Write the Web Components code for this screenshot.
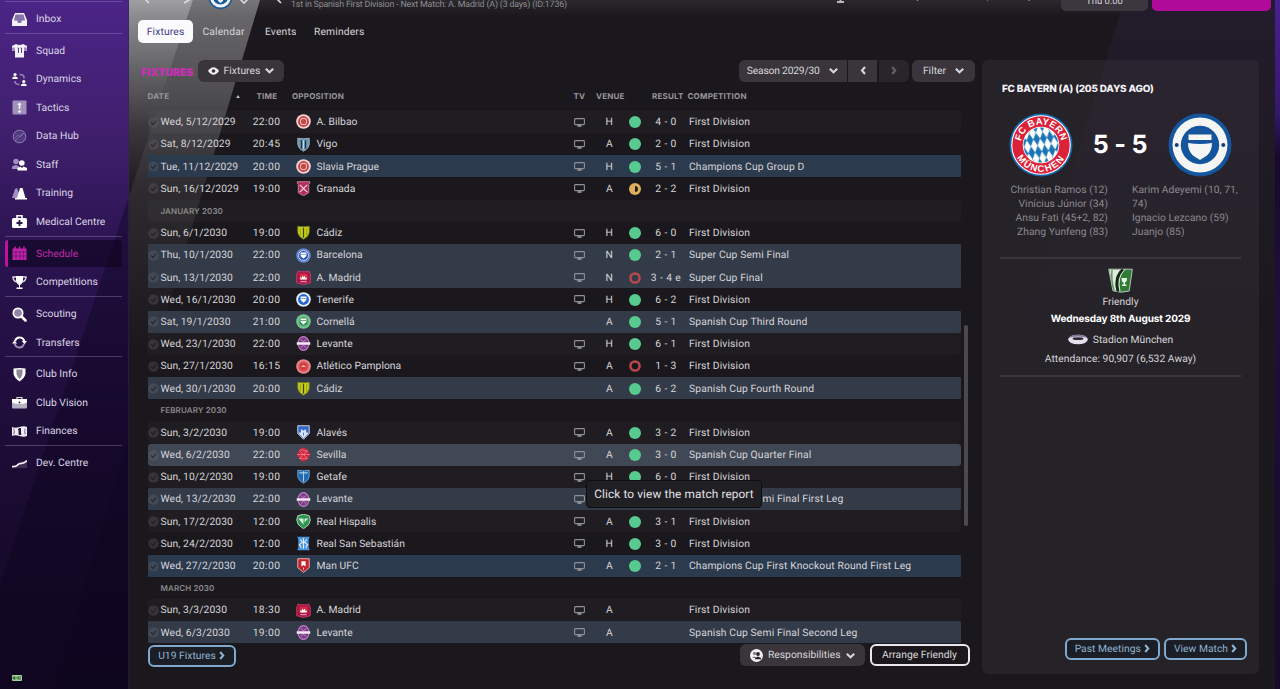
<!DOCTYPE html>
<html lang="en">
<head>
<meta charset="utf-8">
<title>Fixtures</title>
<style>
    html, body {
        margin: 0;
        height: 689px;
        overflow: hidden;
        background: #1a181c;
    }

    body {
        font: 10.3px/14px Roboto, "Liberation Sans", sans-serif;
        letter-spacing: .03px;
        text-rendering: geometricPrecision;
        color: #d8d6da;
    }
</style>
</head>
<body>

<fm-app></fm-app>

<template id="app-template">
    <style>
        :host {
            display: flex;
            position: relative;
            width: 1280px;
            height: 689px;
            overflow: hidden;
            background: #1a181c;
        }

        .backdrop {
            position: absolute;
            inset: 0;
        }

        fm-sidebar { flex: 0 0 129px; }

        main {
            position: relative;
            flex: 1;
            display: flex;
            flex-direction: column;
            min-width: 0;
        }

        .body {
            display: flex;
            height: 630px;
        }

        fm-fixtures { flex: 0 0 853px; }
    </style>

    <svg class="backdrop" width="1280" height="689" viewBox="0 0 1280 689">
        <defs>
            <linearGradient id="side" x1="0" y1="0" x2="0" y2="1">
                <stop offset="0" stop-color="#4b2487"/>
                <stop offset=".18" stop-color="#41206f"/>
                <stop offset=".36" stop-color="#2b1451"/>
                <stop offset=".6" stop-color="#1f0d3a"/>
                <stop offset=".8" stop-color="#180a2c"/>
                <stop offset="1" stop-color="#150926"/>
            </linearGradient>
            <linearGradient id="beam1" x1="0" y1="0" x2="0" y2="1">
                <stop offset="0" stop-color="#fff" stop-opacity=".55"/>
                <stop offset=".3" stop-color="#fff" stop-opacity=".36"/>
                <stop offset=".65" stop-color="#fff" stop-opacity=".14"/>
                <stop offset="1" stop-color="#fff" stop-opacity="0"/>
            </linearGradient>
            <linearGradient id="beam2" x1="0" y1="0" x2="0" y2="1">
                <stop offset="0" stop-color="#fff" stop-opacity=".36"/>
                <stop offset=".25" stop-color="#fff" stop-opacity=".24"/>
                <stop offset=".55" stop-color="#fff" stop-opacity=".08"/>
                <stop offset="1" stop-color="#fff" stop-opacity="0"/>
            </linearGradient>
            <linearGradient id="topbar" x1="0" y1="0" x2="0" y2="1">
                <stop offset="0" stop-color="#2a282d"/>
                <stop offset="1" stop-color="#1a181c"/>
            </linearGradient>
            <linearGradient id="glow" x1="0" y1="0" x2="0" y2="1">
                <stop offset="0" stop-color="#231c2c"/>
                <stop offset="1" stop-color="#1a181c"/>
            </linearGradient>
            <linearGradient id="edge" x1="0" y1="0" x2="0" y2="1">
                <stop offset="0" stop-color="#482090"/>
                <stop offset=".16" stop-color="#35186e"/>
                <stop offset=".23" stop-color="#170a2b"/>
                <stop offset=".45" stop-color="#200e3d"/>
                <stop offset="1" stop-color="#160a28"/>
            </linearGradient>
        </defs>
        <rect x="129" width="1146" height="689" fill="#1a181c"/>
        <rect x="129" width="1146" height="16" fill="url(#topbar)"/>
        <path d="M1124 0H1275V330H1025Z" fill="url(#glow)"/>
        <path d="M129 0H193L129 196Z" fill="url(#beam1)"/>
        <path d="M193 0H260L155 350H129V196Z" fill="url(#beam2)"/>
        <rect width="129" height="689" fill="url(#side)"/>
        <path d="M129 196V689H0V585Z" fill="#0a0418" fill-opacity=".35"/>
        <path d="M129 437V689H54Z" fill="#0a0418" fill-opacity=".2"/>
        <rect x="128" width="1" height="689" fill="#34284a" opacity=".5"/>
        <rect x="1275" width="5" height="689" fill="url(#edge)"/>
    </svg>
    <fm-sidebar></fm-sidebar>
    <main>
        <fm-header></fm-header>
        <div class="body">
            <fm-fixtures></fm-fixtures>
            <fm-match-panel></fm-match-panel>
        </div>
    </main>
</template>

<template id="sidebar-template">
    <style>
        :host {
            display: flex;
            flex-direction: column;
            position: relative;
            box-sizing: border-box;
            padding: 1px 7px 0 5px;
            height: 689px;
        }

        .group {
            border-top: 1px solid rgba(190, 170, 220, .3);
            padding-top: 2.3px;
        }

        .item {
            display: flex;
            align-items: center;
            height: 28.5px;
            box-sizing: border-box;
            padding: 1.2px 0 0 7px;
            gap: 9px;
            color: #dcd6e6;
        }

        .item svg { flex: 0 0 15px; }

        .item.active {
            height: 27px;
            margin: .75px 0;
            border-left: 3px solid #c0119f;
            border-radius: 3px;
            padding-left: 4px;
            background: rgba(14, 4, 28, .6);
            color: #c02aa9;
        }

        .status {
            margin: auto 0 7px 7px;
            height: 10px;
        }
    </style>
    <nav></nav>
    <div class="status">
        <svg width="10" height="9" viewBox="0 0 10 9"><rect y="2" width="10" height="6" rx="1" fill="#a9cf9f"/><path d="M1 5h4M3 3.4L1 5l2 1.6M9 4H6v2h3" stroke="#2c6a30" fill="none" stroke-width="1.2"/></svg>
    </div>
</template>

<template id="header-template">
    <style>
        :host {
            display: flex;
            flex-direction: column;
            height: 59px;
        }

        .top {
            display: flex;
            height: 12px;
            margin-bottom: 8px;
            align-items: flex-start;
        }

        .nav { flex: 0 0 162px; }

        .sub {
            flex: 0 0 540px;
            font-size: 8.900px;
            line-height: 10px;
            letter-spacing: -.19px;
            color: #8e8c90;
        }

        .marks { flex: 0 0 230px; }

        .time, .go {
            box-sizing: border-box;
            height: 11px;
            border-radius: 0 0 5px 5px;
        }

        .time {
            width: 87px;
            background: #3b373f;
            color: #d5d3d7;
            text-align: center;
            font-size: 9.5px;
            line-height: 4px;
            letter-spacing: 0;
        }

        .go {
            width: 119px;
            margin-left: 4px;
            background: #b00a9b;
        }

        .tabs {
            display: flex;
            padding-left: 9px;
        }

        .tab {
            height: 23px;
            line-height: 23px;
            letter-spacing: .15px;
            color: #d8d6da;
        }

        .tab.active {
            width: 55px;
            text-align: center;
            border-radius: 5px;
            background: #fbfafc;
            color: #433a8c;
            margin-right: 9.500px;
        }

        .calendar { width: 62.500px; }
        .events { width: 49px; }
    </style>
    <div class="top">
        <svg class="nav" width="162" height="12" viewBox="129 0 162 12">
            <path d="M149-2l-3 2 3 3M184-3l5 3-5 3M240 -1l4 4 4-4M282-3l-4 3 3 3" fill="none" stroke="#dddbdf" stroke-width="1.6"/>
            <circle cx="220.500" cy="-3" r="12" fill="#15569c"/>
            <circle cx="220.500" cy="-3" r="10.500" fill="#f3f4f4"/>
            <circle cx="220.500" cy="-3" r="7.500" fill="#15569c"/>
            <path d="M217-3h7q0 4-3.500 6q-3.500-2-3.500-6z" fill="#f3f4f4"/>
        </svg>
        <div class="sub">1st in Spanish First Division - Next Match: A. Madrid (A) (3 days) (ID:1736)</div>
        <svg class="marks" width="230" height="12" viewBox="831 0 230 12">
            <path d="M837 2h7M840.500 -1v3" stroke="#b9b7bb" stroke-width="2"/>
            <path d="M917.500 0v1M988 0h-1M1029 0v1" stroke="#8a888c" stroke-width="1.500"/>
        </svg>
        <div class="time"><span>Thu 0:00</span></div>
        <div class="go"></div>
    </div>
    <div class="tabs">
        <div class="tab active">Fixtures</div>
        <div class="tab calendar">Calendar</div>
        <div class="tab events">Events</div>
        <div class="tab">Reminders</div>
    </div>
</template>

<template id="button-template">
    <style>
        :host {
            display: inline-flex;
            align-items: center;
            justify-content: center;
            box-sizing: border-box;
            height: 22.5px;
            gap: 6px;
            border-radius: 6px;
            background: #39353a;
            color: #d8d6da;
            white-space: nowrap;
        }

        :host([variant="outline"]) {
            gap: 3px;
            border: 2px solid #7fa9cf;
            background: #1c1e25;
            color: #8fb3d2;
        }

        :host([variant="light"]) {
            border: 2px solid #e9e7eb;
            background: #1a181c;
            color: #dddbdf;
        }

        :host([variant="dim"]) {
            background: #29262b;
            color: #656268;
        }

        svg { flex: none; }
    </style>
    <slot></slot>
</template>

<template id="fixtures-template">
    <style>
        :host {
            display: flex;
            flex-direction: column;
            position: relative;
        }

        .toolbar {
            display: flex;
            align-items: flex-start;
            height: 30px;
            padding: .5px 7px 0 12px;
            box-sizing: border-box;
        }

        h2 {
            width: 57px;
            margin: 6px 0 0;
            font: 900 10.6px/14px Inter, sans-serif;
            letter-spacing: -.05px;
            color: #c92fb7;
        }

        .view { width: 86px; }

        .season {
            width: 108px;
            gap: 9.5px;
            margin-left: auto;
            border-radius: 6px 0 0 6px;
            letter-spacing: -.2px;
        }

        .prev {
            width: 29px;
            margin: 0 1.5px;
            border-radius: 0;
        }

        .next {
            width: 30px;
            margin-right: 3.5px;
            border-radius: 0 6px 6px 0;
        }

        .filter {
            width: 63px;
            gap: 9px;
        }

        .head, .row {
            display: grid;
            align-items: center;
            width: 813px;
            margin-left: 18.5px;
            box-sizing: border-box;
            white-space: nowrap;
        }

        .head {
            height: 14px;
            font: 700 8px/14px Inter, sans-serif;
            letter-spacing: .2px;
            color: #98969b;
            grid-template-columns: 88px 21px 35.500px 281.500px 22.500px 56px 35.500px 1fr;
        }

        .sort {
            width: 0;
            height: 0;
            border: 2.5px solid transparent;
            border-top: 0;
            border-bottom: 3px solid #bbb9bd;
        }

        .rows {
            display: flex;
            flex-direction: column;
            height: 540.800px;
            padding-top: 7.900px;
            box-sizing: border-box;
        }

        .row {
            height: 22.190px;
            flex: none;
            grid-template-columns: 13px 80.500px 51px 24.500px 251px 23px 37.500px 13px 48px 1fr;
            border-radius: 3px;
        }

        .row > span {
            position: relative;
            top: .3px;
        }

        .row > :nth-child(3) {
            text-align: center;
            letter-spacing: .4px;
        }

        .row > :nth-child(9) {
            letter-spacing: .4px;
            padding-left: 2px;
        }

        .row svg, .row fm-crest { display: block; }

        .row fm-crest { margin-left: 3.500px; }

        .row .center { justify-self: center; text-align: center; }

        .odd { background: rgba(255, 255, 255, .022); }
        .euro { background: #2c3a4d; border-radius: 1px; }
        .cup { background: #333b49; border-radius: 1px; }
        .hover { background: #414855; }

        .month {
            padding-left: 13px;
            display: block;
            font: 600 8px/22.190px Inter, sans-serif;
            letter-spacing: .1px;
            color: #8c8a8e;
        }

        .date { letter-spacing: .1px; }
        .comp { letter-spacing: .14px; }

        .scrollbar {
            position: absolute;
            left: 835px;
            top: 266px;
            width: 3.5px;
            height: 201px;
            border-radius: 2px;
            background: #4b494e;
        }

        .footer {
            display: flex;
            padding: 0 12.5px 0 18.5px;
            gap: 4.5px;
        }

        .u19 { width: 88px; margin-top: .8px; }
        .resp { width: 125.5px; margin-left: auto; }
        .arrange { width: 100px; }

        .tooltip {
            position: absolute;
            left: 457px;
            top: 420.500px;
            width: 176px;
            height: 28px;
            box-sizing: border-box;
            border: 1.5px solid #0d0c0f;
            border-radius: 4px;
            background: #201f23;
            color: #e4e2e6;
            font-size: 11.800px;
            line-height: 26px;
            letter-spacing: .12px;
            text-align: center;
            white-space: nowrap;
        }
    </style>
    <div class="toolbar">
        <h2>FIXTURES</h2>
        <fm-button class="view" lead="eye" icon="down">Fixtures</fm-button>
        <fm-button class="season" icon="down">Season 2029/30</fm-button>
        <fm-button class="prev" icon="left"></fm-button>
        <fm-button class="next" variant="dim" icon="right"></fm-button>
        <fm-button class="filter" icon="down">Filter</fm-button>
    </div>
    <div class="head">
        <span>DATE</span><i class="sort"></i><span>TIME</span><span>OPPOSITION</span><span>TV</span><span>VENUE</span><span>RESULT</span><span>COMPETITION</span>
    </div>
    <div class="rows"></div>
    <div class="footer">
        <fm-button class="u19" variant="outline" icon="right">U19 Fixtures</fm-button>
        <fm-button class="resp" lead="people" icon="down">Responsibilities</fm-button>
        <fm-button class="arrange" variant="light">Arrange Friendly</fm-button>
    </div>
    <div class="scrollbar"></div>
    <div class="tooltip">Click to view the match report</div>
</template>

<template id="panel-template">
    <style>
        :host {
            display: flex;
            flex-direction: column;
            box-sizing: border-box;
            width: 277px;
            height: 614px;
            margin-top: 1px;
            padding: 21.5px 12px 14px 18px;
            border-radius: 6px;
            background: rgba(50, 47, 55, .47);
        }

        h3 {
            margin: 0 0 0 2px;
            font: 800 9.9px/14px Inter, sans-serif;
            letter-spacing: -.18px;
            color: #f4f2f6;
        }

        .score {
            display: flex;
            align-items: center;
            justify-content: space-between;
            height: 64px;
            margin: 17.5px 15.5px 0 8.5px;
        }

        .score b {
            font: 700 25px/30px Inter, sans-serif;
            letter-spacing: -.2px;
            color: #fff;
        }

        .scorers {
            display: flex;
            height: 74px;
            gap: 24px;
            margin-top: 6px;
            color: #8c898e;
            border-bottom: 2px solid #39363c;
            width: 241px;
            white-space: nowrap;
        }

        .scorers div:first-child {
            flex: 0 0 108px;
            text-align: right;
        }

        .info {
            display: flex;
            flex-direction: column;
            align-items: center;
            width: 241px;
            height: 118px;
            box-sizing: border-box;
            padding-top: 9px;
            border-bottom: 2px solid #39363c;
        }

        .info > span { margin-top: 2px; }

        .info strong {
            font: 700 10px/14px Inter, sans-serif;
            letter-spacing: -.12px;
            color: #fff;
            margin-top: 2.500px;
        }

        .stadium {
            display: flex;
            align-items: center;
            gap: 5px;
            margin-top: 7px;
        }

        .info > span.attendance { margin-top: 5px; }

        .actions {
            display: flex;
            justify-content: flex-end;
            gap: 4px;
            margin-top: auto;
        }

        .past { width: 95.5px; }
        .view { width: 83px; }
    </style>
    <h3>FC BAYERN (A) (205 DAYS AGO)</h3>
    <div class="score">
        <svg width="64" height="64" viewBox="-32 -32 64 64">
            <defs>
                <clipPath id="core"><circle r="17.500"/></clipPath>
                <pattern id="lozenge" width="6.800" height="13" patternUnits="userSpaceOnUse" patternTransform="rotate(-8)">
                    <path d="M3.400 0L6.800 6.500 3.400 13 0 6.500Z" fill="#1a74b8"/>
                </pattern>
                <path id="arcTop" d="M-20.500 0A20.500 20.500 0 0 1 20.500 0"/>
                <path id="arcBottom" d="M-27 0A27 27 0 0 0 27 0"/>
            </defs>
            <circle r="31.500" fill="#1668ad"/>
            <circle r="29.800" fill="#fff"/>
            <circle r="28.700" fill="#dc2139"/>
            <circle r="18.300" fill="#fff"/>
            <g clip-path="url(#core)"><rect x="-18" y="-18" width="36" height="36" fill="url(#lozenge)"/></g>
            <g fill="#fff" font-family="Liberation Sans, sans-serif" font-weight="700" font-size="9.500" text-anchor="middle" letter-spacing=".2">
                <text><textPath href="#arcTop" startOffset="50%">FC BAYERN</textPath></text>
                <text letter-spacing="1.400"><textPath href="#arcBottom" startOffset="50%">MÜNCHEN</textPath></text>
            </g>
        </svg>
        <b>5 - 5</b>
        <svg width="64" height="64" viewBox="-32 -32 64 64">
            <circle r="31.500" fill="#14559d"/>
            <circle r="27.500" fill="#f5f5f3"/>
            <circle r="19.200" fill="#14559d"/>
            <circle cx="-23.300" r="2" fill="#143e75"/>
            <circle cx="23.300" r="2" fill="#143e75"/>
            <path d="M-11.500-10.500h23v5.500h-23zM-12-2Q0 0 12-2Q12 6 7 10.500L0 15-7 10.500Q-12 6-12-2z" fill="#f5f5f3"/>
        </svg>
    </div>
    <div class="scorers">
        <div>Christian Ramos (12)<br>Vinícius Júnior (34)<br>Ansu Fati (45+2, 82)<br>Zhang Yunfeng (83)</div>
        <div>Karim Adeyemi (10, 71,<br>74)<br>Ignacio Lezcano (59)<br>Juanjo (85)</div>
    </div>
    <div class="info">
        <svg width="25" height="25" viewBox="0 0 25 25">
            <path d="M.7 1.200H24.300L21.200 23Q12.500 25.500 5 22.800Z" fill="#2f7b36" stroke="#b8c4b8"/>
            <path d="M1.500 1.800H14Q5 10 8.500 23L5.500 22Z" fill="#e3e9e1"/>
            <path d="M4 2Q3 12 6 22" fill="none" stroke="#5f9a64" stroke-width="1.500"/>
            <path d="M15 1.500Q6 9 10 23.500" fill="none" stroke="#14251a" stroke-width="2.600"/>
            <path d="M17 1.500Q8.500 9 12 23.500" fill="none" stroke="#e8eee8" stroke-width="1"/>
            <path d="M13.500 10h5.500q0 4-2 4.500v2h1.500v1.500h-4.500v-1.500h1.500v-2q-2-.5-2-4.500z" fill="#e8f2e4"/>
        </svg>
        <span>Friendly</span>
        <strong>Wednesday 8th August 2029</strong>
        <div class="stadium">
            <svg width="20" height="11" viewBox="0 0 20 11"><ellipse cx="10" cy="5.500" rx="9.800" ry="4.800" fill="#e4dfea"/><path d="M.3 4.500Q2 .7 10 .7t9.700 3.800Q17 2.500 10 2.500T.3 4.500" fill="#81739b"/><ellipse cx="10" cy="4.700" rx="5.500" ry="1.400" fill="#302a37"/></svg>
            <span>Stadion München</span>
        </div>
        <span class="attendance">Attendance: 90,907 (6,532 Away)</span>
    </div>
    <div class="actions">
        <fm-button class="past" variant="outline" icon="right">Past Meetings</fm-button>
        <fm-button class="view" variant="outline" icon="right">View Match</fm-button>
    </div>
</template>

<script>
    (function(window, document) {

        // Base class: clones a template into an open shadow root.
        class FmElement extends HTMLElement {
            constructor(templateId) {
                super();
                const root = this.attachShadow({mode: 'open'});
                root.appendChild(document.getElementById(templateId).content.cloneNode(true));
            }
        }

        const NAV_ICONS = {
            inbox: '<path d="M3 1h9l3 7v6H0V8z" fill="#f4f1f8"/><path d="M3.500 2.500h8l1.500 6h-3l-1 2.500h-3L5 8.500H2z" fill="#8673ad"/>',
            squad: '<path d="M4 1L0 3v4h3v7.500h9V7h3V3l-4-2q-3.500 2-7 0" fill="#f4f1f8"/><path d="M0 4.500h3V8H0zM12 4.500h3V8h-3z" fill="#a090c0"/><path d="M5.500 5h1v5M8.500 5h1v5" fill="none" stroke="#56408a" stroke-width="1"/>',
            dynamics: '<path d="M7.500 2.500q5 0 4.500 4M7.500 12.500q-4.500 0-4.500-3.500" fill="none" stroke="#8f7eb0" stroke-width="1.700"/><circle cx="3" cy="2.500" r="1.600" fill="#fff"/><path d="M.3 7V5.800q2.700-2.500 5.400 0V7zM9 14v-1.300q2.800-2.500 5.600 0V14z" fill="#fff"/><circle cx="11.800" cy="9.500" r="1.600" fill="#fff"/>',
            tactics: '<rect x=".5" y=".5" width="14" height="14" rx="1" fill="#a090bc"/><path d="M7.500 3v6" stroke="#fff" stroke-width="1.500"/><path d="M5.500 5l2-2.500 2 2.500" fill="#fff"/><circle cx="7.500" cy="11.500" r="1.300" fill="#fff"/>',
            data: '<circle cx="7.500" cy="7.500" r="6.300" fill="#65549a" fill-opacity=".5" stroke="#9080b0"/><path d="M3 9l3-3 2 2 4-4M3 12l8-8" fill="none" stroke="#9b8ebb" stroke-width=".5"/>',
            staff: '<circle cx="4" cy="4.500" r="2.800" fill="#a08fc0"/><path d="M0 12V9.500Q4 6.500 7 9.500V12z" fill="#a08fc0"/><circle cx="9.800" cy="6" r="2.800" fill="#fff"/><path d="M5.500 13.500V11l3-1.500 1.500 1.500 1.500-1.500 3.500 1.500v2.500z" fill="#fff"/>',
            training: '<path d="M0 12L3 3l2-1 4 10z" fill="#a08fc0"/><path d="M5 12L8 2h2.500l3 10H15v1.500H3V12z" fill="#fff"/>',
            medical: '<rect y="4" width="15" height="10" rx="1.500" fill="#fff"/><path d="M5 4V1.800h5V4" fill="none" stroke="#fff" stroke-width="1.600"/><path d="M7.500 6v6M4.500 9h6" stroke="#27144a" stroke-width="1.800"/>',
            schedule: '<path d="M.5 2.500h14v11.500H.5z" fill="#bd23a6"/><path d="M3 .5v3M7.500.5v3M12 .5v3" stroke="#bd23a6" stroke-width="1.500"/><path d="M1 6h13M1 10h13M4 5v8.500M8 5v8.500M11.500 5v8.500" stroke="#68126a" stroke-width=".7"/>',
            competitions: '<path d="M4 1h7v5q-1 3-3 4v2.500h2.500V14h-6v-1.500H7V10Q5 9 4 6z" fill="#fff"/><path d="M4 2H1q0 4 4 5M11 2h3q0 4-4 5" fill="none" stroke="#dcd7e3" stroke-width="1.400"/>',
            scouting: '<circle cx="6" cy="6" r="4.700" fill="#9185a6" stroke="#fff" stroke-width="1.700"/><path d="M9.500 9.500l4 4" stroke="#fff" stroke-width="2.600" stroke-linecap="round"/>',
            transfers: '<path d="M3 6q1.500-4 5-3.500 3 0 4.500 4" fill="none" stroke="#fff" stroke-width="2"/><path d="M9.800 6H15l-2.500 3.200z" fill="#fff"/><path d="M12 9q-1.500 4-5 3.500-3 0-4.500-4" fill="none" stroke="#9e91b1" stroke-width="2"/><path d="M5.200 8.500H0l2.500-3z" fill="#fff"/>',
            club: '<path d="M1.500 1.500q6 -1 12 0V7q-1 4-6 7.500-5-3.500-6-7.500z" fill="#fff"/><path d="M4.500 2.500h6V7q-.7 3-3 5-2.300-2-3-5z" fill="#8e8898"/>',
            vision: '<rect y="4" width="15" height="9.500" rx="1" fill="#b7afc2"/><path d="M0 4h15v3.500q-7.500 3-15 0z" fill="#fff"/><path d="M5 4V2.500h5V4" fill="none" stroke="#ddd" stroke-width="1.200"/><circle cx="7.500" cy="7.500" r="1" fill="#30213e"/>',
            finances: '<path d="M0 3q3 1.500 7.500 0t7.500 0v9q-3 1.500-7.500 0T0 12z" fill="#f0edf4"/><path d="M1.500 4.500q2 3 0 6M13.500 4.500q-2 3 0 6" stroke="#9a90aa" fill="none" stroke-width="1.200"/><path d="M7 4.500h1.500v6H7zM6 5.500h2M7 10h2.500" stroke="#2a1840" fill="#2a1840" stroke-width="1"/>',
            dev: '<path d="M0 10q4 1 6-2t9-3.500V12H0z" fill="#5b4a6c" fill-opacity=".55"/><path d="M0 10.500q4 .3 5.500-1.500t4-1.700T15 4.500" fill="none" stroke="#f6f3f9" stroke-width="1.700"/>'
        };

        const NAV = [
            [['inbox', 'Inbox']],
            [['squad', 'Squad'], ['dynamics', 'Dynamics'], ['tactics', 'Tactics'], ['data', 'Data Hub'], ['staff', 'Staff'], ['training', 'Training'], ['medical', 'Medical Centre']],
            [['schedule', 'Schedule'], ['competitions', 'Competitions']],
            [['scouting', 'Scouting'], ['transfers', 'Transfers']],
            [['club', 'Club Info'], ['vision', 'Club Vision'], ['finances', 'Finances']],
            [['dev', 'Dev. Centre']]
        ];

        class FmSidebar extends FmElement {
            constructor() {
                super('sidebar-template');
                this.shadowRoot.querySelector('nav').innerHTML = NAV.map(group =>
                    '<div class="group">' + group.map(([icon, label]) =>
                        `<div class="item${icon === 'schedule' ? ' active' : ''}"><svg width="15" height="15" viewBox="0 0 15 15">${NAV_ICONS[icon]}</svg><span>${label}</span></div>`
                    ).join('') + '</div>'
                ).join('');
            }
        }

        const chevron = (w, d) => `<svg width="${w}" height="9" viewBox="0 0 ${w} 9"><path d="${d}" fill="none" stroke="currentColor" stroke-width="2.100"/></svg>`;

        const BUTTON_ICONS = {
            down: chevron(9, 'M.8 2.800l3.700 3.500 3.700-3.500'),
            left: chevron(6, 'M5 1L2 4.500 5 8'),
            right: chevron(6, 'M1.200 1l3 3.500-3 3.500'),
            eye: '<svg width="11" height="8" viewBox="0 0 11 8"><path d="M0 4q5.500-7.500 11 0-5.500 7.500-11 0" fill="#f0eef2"/><circle cx="5.500" cy="4" r="1.800" fill="#39353a"/></svg>',
            people: '<svg width="13" height="13" viewBox="0 0 13 13"><circle cx="6.500" cy="6.500" r="6.500" fill="#f3eff2"/><circle cx="4.500" cy="4.500" r="1.700" fill="#8a8389"/><path d="M2 9q2-3 5 0z" fill="#8a8389"/><circle cx="8" cy="5" r="1.900" fill="#272328"/><path d="M5 10.300V9l3-1.500L11 9v1.300z" fill="#272328"/></svg>'
        };

        class FmButton extends FmElement {
            constructor() {
                super('button-template');
            }

            connectedCallback() {
                const slot = this.shadowRoot.querySelector('slot');
                if (this.hasAttribute('lead')) {
                    slot.insertAdjacentHTML('beforebegin', BUTTON_ICONS[this.getAttribute('lead')]);
                    this.style.gap = '5px';
                }
                if (this.hasAttribute('icon')) {
                    slot.insertAdjacentHTML('afterend', BUTTON_ICONS[this.getAttribute('icon')]);
                }
                if (!this.textContent) {
                    this.style.gap = '0';
                }
            }
        }

        const SHIELD = 'M1.500 1q5.500 1 11 0v6q-.5 4-5.500 6.500Q2 11 1.500 7z';
        const ring = (main, light, inner) => `<circle cx="7" cy="7" r="7" fill="${light}"/><circle cx="7" cy="7" r="5.200" fill="${main}"/>${inner}`;
        const badge = '<path d="M4.200 4.200h5.600v3.300L7 10.200 4.200 7.500z" fill="#fff"/><path d="M4.500 6h5" stroke="#6d90d8" stroke-width=".8"/>';

        const CRESTS = {
            redRing: ring('#c83c40', '#f5d5d2', '<circle cx="7" cy="7" r="3.500" fill="#f5d5d2"/><circle cx="7" cy="7" r="2.700" fill="#c24a4a"/>'),
            vigo: `<path d="${SHIELD}" fill="#6d95b4" stroke="#a6bccd" stroke-width=".8"/><path d="M5 3v8M9 3v8" stroke="#223443" stroke-width="1.200"/><path d="M7 3v8.500" stroke="#c0d7e4"/>`,
            granada: `<path d="M1 .5h12v1.500L12 3v8l-5 3-5-3V3L1 2z" fill="#b52c58" stroke="#e3a3b6" stroke-width=".7"/><path d="M3.500 3.500l7 7M10.500 3.500l-7 7" stroke="#f2dae1" stroke-width="1.200"/>`,
            cadiz: `<path d="${SHIELD}" fill="#c6cf19" stroke="#777d1b" stroke-width=".8"/><path d="M4 3v7M10 3v7" stroke="#8f9617" stroke-width=".8"/><path d="M7 2.500v9.500" stroke="#3f4310" stroke-width="1.200"/>`,
            barcelona: ring('#2454b3', '#6386d4', '<circle cx="7" cy="7" r="4.800" fill="none" stroke="#d6e0fa" stroke-width=".9"/>' + badge),
            madrid: '<path d="M2 .5l1.500 1h7l1.500-1L13.500 4v8L7 13.800.5 12V4z" fill="#a61447" stroke="#d84b75" stroke-width=".7"/><rect x="3" y="3.300" width="8" height="6.300" fill="#d42b42"/><path d="M4 9V6.500l1.500 1V5L7 6.500 8.500 5v2.500l1.500-1V9z" fill="#fff"/><path d="M4 11h6" stroke="#e6a8bb"/>',
            tenerife: ring('#2166d1', '#e6effb', badge),
            cornella: ring('#228747', '#75c990', '<circle cx="7" cy="7" r="4.500" fill="none" stroke="#bbedc9" stroke-width=".7"/>' + badge.replace('#6d90d8', '#2f9855')),
            levante: '<ellipse cx="7" cy="7" rx="5.300" ry="6.600" fill="#7d3a86" stroke="#c07fc6"/><path d="M4.500 3l2.500 2.500L9.500 3M4.500 11L7 8.500l2.500 2.500" stroke="#d3a0d6" stroke-width=".8" fill="none"/><rect x=".5" y="5.800" width="13" height="2.400" fill="#f3ebf5"/>',
            pamplona: ring('#d53d45', '#e7898a', '<circle cx="7" cy="7" r="4.500" fill="none" stroke="#ef8d8c" stroke-width=".6"/><path d="M4.500 7.500L7 5.500l2.500 2z" fill="#f7c7b8"/>'),
            alaves: '<path d="M1.500.5h11V8L7 13.500 1.500 8z" fill="#3567c9" stroke="#e5edf9" stroke-width=".8"/><path d="M2.500 7h2V4H6v1h2V4h1.500v3h2v1L7 12.500 2.500 8z" fill="#dbe7f8"/><path d="M7 7v3" stroke="#4c7acf"/>',
            sevilla: '<path d="M7 0l3.500 2 3 5-3 5L7 14l-3.500-2-3-5 3-5z" fill="#d3293e"/><path d="M1 7h12M3 3l8 8M11 3l-8 8M4 2l7 2M3 11h8" stroke="#ed8993" stroke-width=".7"/>',
            getafe: `<path d="${SHIELD}" fill="#206bb3" stroke="#7eadda" stroke-width=".8"/><path d="M7 2v10M3 3.500h8" stroke="#a7cae6"/>`,
            hispalis: '<path d="M1.500 1.500L7 0l5.500 1.500 1 4L12 10l-5 4-5-4L.5 5.500z" fill="#2d9452" stroke="#cbe8d1" stroke-width=".8"/><path d="M2 4h5v6zM8 4h3.500L8 8z" fill="#d8eedb"/>',
            sebastian: '<path d="M1 .5h12L12 3v8l1 2.500H1L2 11V3z" fill="#4d96dd"/><path d="M4 3l2 3-3 2 2 3M10 3L8 6l3 2-2 3M7 2v10" stroke="#e3effb" fill="none"/>',
            man: '<path d="M1.500.5h11V9L7 13.700 1.500 9z" fill="#c5222c" stroke="#f0b3b0" stroke-width=".9"/><path d="M5 3h4v5L7 6.500 5 8z" fill="#fff"/><path d="M7 9v2" stroke="#ffd6cf"/>'
        };

        class FmCrest extends HTMLElement {
            constructor() {
                super();
                this.attachShadow({mode: 'open'});
            }

            connectedCallback() {
                this.shadowRoot.innerHTML = `<style>:host { display: block; width: 15px; height: 15px; } svg { display: block; }</style>
                    <svg width="15" height="15" viewBox="-.2 -.2 14.400 14.400">${CRESTS[this.getAttribute('team')]}</svg>`;
            }
        }

        const CHECK = '<svg width="11" height="11" viewBox="0 0 11 11"><circle cx="5.500" cy="5.500" r="5.300" fill="#6d6a72" fill-opacity=".3"/><path d="M3 5.500l2 2 3.200-3.800" stroke="#17151a" stroke-opacity=".6" stroke-width="1.200" fill="none"/></svg>';
        const TV = '<svg width="11" height="9" viewBox="0 0 11 9"><rect x=".6" y=".6" width="9.800" height="6" rx=".8" fill="none" stroke="#8f9096" stroke-width="1.100"/><path d="M3.500 8h4" stroke="#a5a6ab" stroke-width="1.500"/></svg>';

        const OUTCOMES = {
            W: '<circle cx="6" cy="6" r="6" fill="#57ca8f"/>',
            D: '<circle cx="6" cy="6" r="6" fill="#dcae5b"/><path d="M6 3a3 3 0 0 1 0 6z" fill="#211d1c"/>',
            L: '<circle cx="6" cy="6" r="4.600" fill="none" stroke="#b8484e" stroke-width="2.500"/>'
        };

        // date, time, crest, opposition, tv, venue, outcome, result, competition, row style
        const FIXTURES = [
            ['Wed, 5/12/2029', '22:00', 'redRing', 'A. Bilbao', 1, 'H', 'W', '4 - 0', 'First Division', 'odd'],
            ['Sat, 8/12/2029', '20:45', 'vigo', 'Vigo', 1, 'A', 'W', '2 - 0', 'First Division', ''],
            ['Tue, 11/12/2029', '20:00', 'redRing', 'Slavia Prague', 1, 'H', 'W', '5 - 1', 'Champions Cup Group D', 'euro'],
            ['Sun, 16/12/2029', '19:00', 'granada', 'Granada', 1, 'A', 'D', '2 - 2', 'First Division', ''],
            ['JANUARY 2030', 'odd'],
            ['Sun, 6/1/2030', '19:00', 'cadiz', 'Cádiz', 1, 'H', 'W', '6 - 0', 'First Division', ''],
            ['Thu, 10/1/2030', '22:00', 'barcelona', 'Barcelona', 1, 'N', 'W', '2 - 1', 'Super Cup Semi Final', 'cup'],
            ['Sun, 13/1/2030', '22:00', 'madrid', 'A. Madrid', 1, 'N', 'L', '3 - 4 e', 'Super Cup Final', 'cup'],
            ['Wed, 16/1/2030', '20:00', 'tenerife', 'Tenerife', 1, 'H', 'W', '6 - 2', 'First Division', ''],
            ['Sat, 19/1/2030', '21:00', 'cornella', 'Cornellá', 0, 'A', 'W', '5 - 1', 'Spanish Cup Third Round', 'cup'],
            ['Wed, 23/1/2030', '22:00', 'levante', 'Levante', 1, 'H', 'W', '6 - 1', 'First Division', 'odd'],
            ['Sun, 27/1/2030', '16:15', 'pamplona', 'Atlético Pamplona', 1, 'A', 'L', '1 - 3', 'First Division', ''],
            ['Wed, 30/1/2030', '20:00', 'cadiz', 'Cádiz', 0, 'A', 'W', '6 - 2', 'Spanish Cup Fourth Round', 'cup'],
            ['FEBRUARY 2030', ''],
            ['Sun, 3/2/2030', '19:00', 'alaves', 'Alavés', 1, 'A', 'W', '3 - 2', 'First Division', 'odd'],
            ['Wed, 6/2/2030', '22:00', 'sevilla', 'Sevilla', 1, 'A', 'W', '3 - 0', 'Spanish Cup Quarter Final', 'hover'],
            ['Sun, 10/2/2030', '19:00', 'getafe', 'Getafe', 1, 'H', 'W', '6 - 0', 'First Division', 'odd'],
            ['Wed, 13/2/2030', '22:00', 'levante', 'Levante', 1, '', '', '', 'Spanish Cup Semi Final First Leg', 'cup'],
            ['Sun, 17/2/2030', '12:00', 'hispalis', 'Real Hispalis', 1, 'A', 'W', '3 - 1', 'First Division', 'odd'],
            ['Sun, 24/2/2030', '12:00', 'sebastian', 'Real San Sebastián', 1, 'H', 'W', '3 - 0', 'First Division', ''],
            ['Wed, 27/2/2030', '20:00', 'man', 'Man UFC', 1, 'A', 'W', '2 - 1', 'Champions Cup First Knockout Round First Leg', 'euro'],
            ['MARCH 2030', ''],
            ['Sun, 3/3/2030', '18:30', 'madrid', 'A. Madrid', 1, 'A', '', '', 'First Division', 'odd'],
            ['Wed, 6/3/2030', '19:00', 'levante', 'Levante', 1, 'A', '', '', 'Spanish Cup Semi Final Second Leg', 'cup']
        ];

        class FmFixtures extends FmElement {
            constructor() {
                super('fixtures-template');
                this.shadowRoot.querySelector('.rows').innerHTML = FIXTURES.map(row => this.renderRow(row)).join('');
            }

            renderRow(row) {
                if (row.length === 2) {
                    return `<div class="row month ${row[1]}">${row[0]}</div>`;
                }
                const [date, time, crest, team, tv, venue, outcome, result, competition, style] = row;
                return `<div class="row ${style}">
                    <span>${CHECK}</span>
                    <span class="date">${date}</span>
                    <span>${time}</span>
                    <fm-crest team="${crest}"></fm-crest>
                    <span>${team}</span>
                    <span class="center">${tv ? TV : ''}</span>
                    <span class="center">${venue}</span>
                    <span class="center">${outcome ? `<svg width="12" height="12" viewBox="0 0 12 12">${OUTCOMES[outcome]}</svg>` : ''}</span>
                    <span class="center">${result}</span>
                    <span class="comp">${competition}</span>
                </div>`;
            }
        }

        class FmHeader extends FmElement {
            constructor() {
                super('header-template');
            }
        }

        class FmMatchPanel extends FmElement {
            constructor() {
                super('panel-template');
            }
        }

        class FmApp extends FmElement {
            constructor() {
                super('app-template');
            }
        }

        window.customElements.define('fm-button', FmButton);
        window.customElements.define('fm-crest', FmCrest);
        window.customElements.define('fm-sidebar', FmSidebar);
        window.customElements.define('fm-header', FmHeader);
        window.customElements.define('fm-fixtures', FmFixtures);
        window.customElements.define('fm-match-panel', FmMatchPanel);
        window.customElements.define('fm-app', FmApp);
    })(window, document);
</script>
</body>
</html>
